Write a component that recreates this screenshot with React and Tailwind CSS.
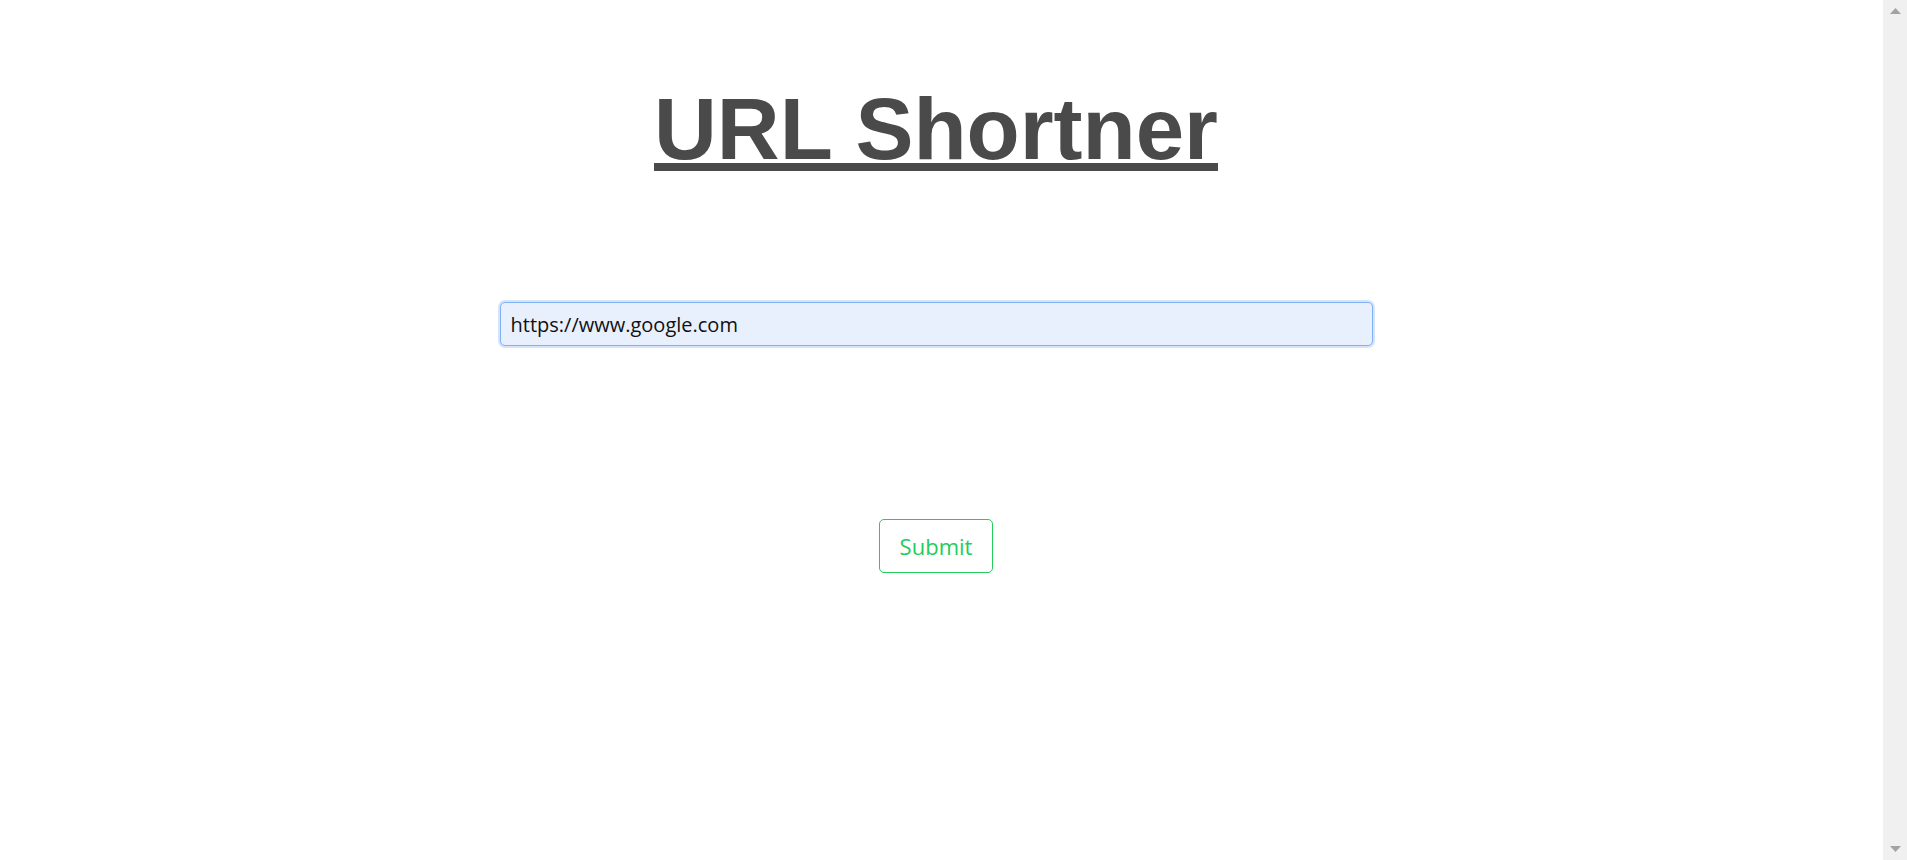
const App = () => {
  return (
    <div className="flex h-screen w-full bg-white overflow-hidden">
      <main className="flex-1 flex flex-col items-center pr-[11px]">
        <h1 className="mt-[79px] text-[87px] leading-[100px] font-bold text-[#4a4a4a] underline decoration-[8px] underline-offset-[4px] font-['Liberation_Sans',Arial,sans-serif]">
          URL Shortner
        </h1>

        <form
          onSubmit={(e) => e.preventDefault()}
          className="flex flex-col items-center w-full"
        >
          <input
            type="text"
            defaultValue="https://www.google.com"
            className="mt-[123px] w-[873px] h-[44px] px-[10px] bg-[#e8f0fe] border border-[#80b2f3] rounded-[5px] shadow-[0_0_0_2px_#d5e4fb] text-[20px] text-[#111] font-['Open_Sans',sans-serif] outline-none"
          />
          <button
            type="submit"
            className="mt-[173px] w-[114px] h-[54px] border border-[#24cc5c] rounded-[5px] bg-white text-[22px] text-[#24cc5c] font-['Open_Sans',sans-serif]"
          >
            Submit
          </button>
        </form>
      </main>

      {/* scrollbar strip */}
      <aside className="w-[24px] h-full bg-[#f0f0f0] flex flex-col justify-between items-center py-[8px]">
        <svg width="11" height="6" viewBox="0 0 11 6">
          <path d="M5.5 0 L11 6 L0 6 Z" fill="#a3a3a3" />
        </svg>
        <svg width="11" height="6" viewBox="0 0 11 6">
          <path d="M0 0 L11 0 L5.5 6 Z" fill="#a3a3a3" />
        </svg>
      </aside>
    </div>
  );
};

export default App;
